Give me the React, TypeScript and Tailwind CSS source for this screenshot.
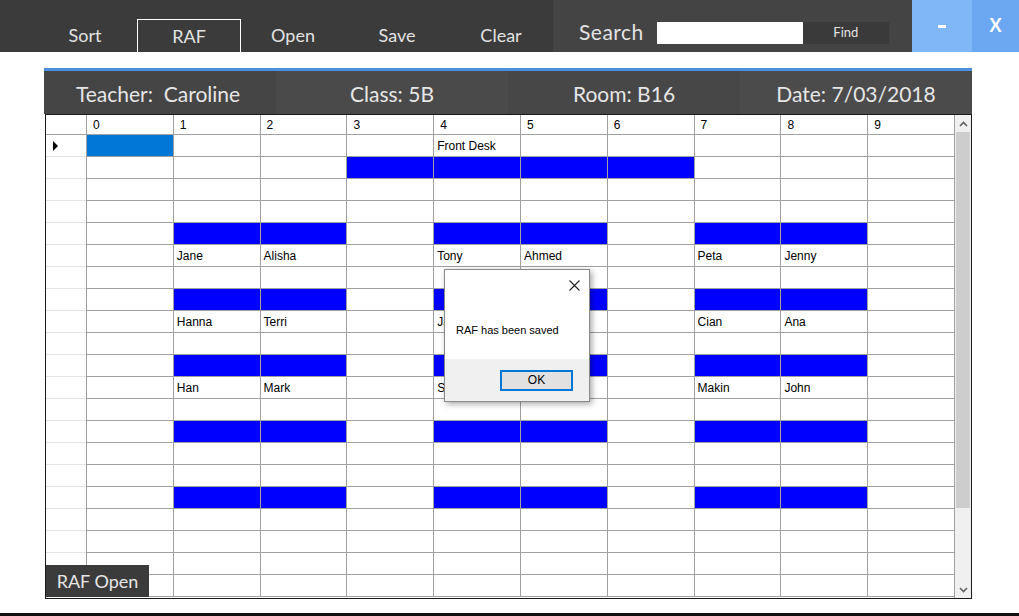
import React from "react";

type Cell = string;

const B = "#B";
const SEL = "#S";

const rows: Cell[][] = [
  [SEL, "", "", "", "Front Desk", "", "", "", "", ""],
  ["", "", "", B, B, B, B, "", "", ""],
  ["", "", "", "", "", "", "", "", "", ""],
  ["", "", "", "", "", "", "", "", "", ""],
  ["", B, B, "", B, B, "", B, B, ""],
  ["", "Jane", "Alisha", "", "Tony", "Ahmed", "", "Peta", "Jenny", ""],
  ["", "", "", "", "", "", "", "", "", ""],
  ["", B, B, "", B, B, "", B, B, ""],
  ["", "Hanna", "Terri", "", "Jack", "", "", "Cian", "Ana", ""],
  ["", "", "", "", "", "", "", "", "", ""],
  ["", B, B, "", B, B, "", B, B, ""],
  ["", "Han", "Mark", "", "Sam", "", "", "Makin", "John", ""],
  ["", "", "", "", "", "", "", "", "", ""],
  ["", B, B, "", B, B, "", B, B, ""],
  ["", "", "", "", "", "", "", "", "", ""],
  ["", "", "", "", "", "", "", "", "", ""],
  ["", B, B, "", B, B, "", B, B, ""],
  ["", "", "", "", "", "", "", "", "", ""],
  ["", "", "", "", "", "", "", "", "", ""],
  ["", "", "", "", "", "", "", "", "", ""],
  ["", "", "", "", "", "", "", "", "", ""],
];

const menu = ["Sort", "RAF", "Open", "Save", "Clear"];

function GridCell({ value }: { value: Cell }) {
  if (value === B) return <div className="h-full border-l border-b border-[#a0a0a0] bg-[#0000ff]" />;
  if (value === SEL) return <div className="h-full border-l border-b border-[#a0a0a0] bg-[#0078d7]" />;
  return (
    <div className="h-full border-l border-b border-[#a0a0a0] pl-[3px] flex items-center text-[12px] text-black whitespace-nowrap overflow-hidden">
      {value}
    </div>
  );
}

export default function App() {
  return (
    <div
      className="relative w-[1019px] h-[616px] bg-white overflow-hidden"
      style={{ fontFamily: "Lato, 'Open Sans', sans-serif" }}
    >
      {/* title / menu bar */}
      <div className="flex h-[52px] bg-[#3b3b3b] text-[#e2e2e2]">
        <div className="flex pl-[33px]">
          {menu.map((m) => (
            <div
              key={m}
              className={
                "w-[104px] h-[33px] self-end flex items-center justify-center text-[18px] " +
                (m === "RAF" ? "border border-white border-b-0" : "")
              }
            >
              {m}
            </div>
          ))}
        </div>
        <div className="w-[359px] bg-[#444444] flex items-end pl-[26px] pb-[7px]">
          <span className="text-[21px] tracking-[0.5px] mr-[13px] leading-[26px]">Search</span>
          <div className="w-[146px] h-[22px] mb-[1px] bg-white" />
          <div className="w-[86px] h-[22px] mb-[1px] bg-[#3a3a3a] flex items-center justify-center text-[13px]">Find</div>
        </div>
        <div className="w-[60px] bg-[#80b7f6] flex items-center justify-center">
          <div className="w-[8px] h-[3px] bg-white" />
        </div>
        <div className="flex-1 bg-[#6ca7f1] flex items-center justify-center text-white text-[18px] font-bold pb-[2px]">
          X
        </div>
      </div>

      {/* main panel */}
      <div className="pt-[16px] pl-[44px]">
        <div className="w-[928px]">
          <div className="h-[3px] bg-[#4b8fe0]" />
          <div className="grid grid-cols-4 h-[43px] text-[#e6e6e6] text-[21px]">
            <div className="bg-[#454545] flex items-center justify-center pt-[3px] pr-[4px]">Teacher:&nbsp; Caroline</div>
            <div className="bg-[#4a4a4a] flex items-center justify-center pt-[3px]">Class: 5B</div>
            <div className="bg-[#474747] flex items-center justify-center pt-[3px]">Room: B16</div>
            <div className="bg-[#4b4b4b] flex items-center justify-center pt-[3px]">Date: 7/03/2018</div>
          </div>

          {/* data grid */}
          <div
            className="ml-[1px] h-[485px] border border-[#1a1a1a] flex"
            style={{ fontFamily: "'Liberation Sans', Arial, sans-serif" }}
          >
            <div className="flex-1 min-w-0 flex flex-col">
              <div className="grid grid-cols-[40px_repeat(10,minmax(0,1fr))] h-[20px]">
                <div className="border-b border-[#a0a0a0]" />
                {Array.from({ length: 10 }, (_, i) => (
                  <div key={i} className="border-l border-b border-[#a0a0a0] pl-[6px] flex items-center text-[12px] text-black">
                    {i}
                  </div>
                ))}
              </div>
              {rows.map((r, ri) => (
                <div key={ri} className="grid grid-cols-[40px_repeat(10,minmax(0,1fr))] h-[22px]">
                  <div className="h-full border-b border-[#e3e3e3] flex items-center pl-[7px]">
                    {ri === 0 && (
                      <svg width="6" height="10" viewBox="0 0 6 10">
                        <path d="M0 0 L5 5 L0 10 Z" fill="#000" />
                      </svg>
                    )}
                  </div>
                  {r.map((c, ci) => (
                    <GridCell key={ci} value={c} />
                  ))}
                </div>
              ))}
            </div>
            <div className="w-[17px] bg-[#f0f0f0] flex flex-col border-l border-[#a0a0a0]">
              <div className="h-[17px] flex items-center justify-center">
                <svg width="9" height="6" viewBox="0 0 9 6">
                  <path d="M1 5 L4.5 1.5 L8 5" stroke="#606060" strokeWidth="1.6" fill="none" />
                </svg>
              </div>
              <div className="h-[376px] mx-[1px] bg-[#cdcdcd]" />
              <div className="flex-1" />
              <div className="h-[17px] flex items-center justify-center">
                <svg width="9" height="6" viewBox="0 0 9 6">
                  <path d="M1 1 L4.5 4.5 L8 1" stroke="#606060" strokeWidth="1.6" fill="none" />
                </svg>
              </div>
            </div>
          </div>
        </div>
      </div>

      {/* bottom edge */}
      <div className="absolute left-0 right-0 bottom-0 h-[3px] bg-[#111]" />

      {/* status label */}
      <div className="absolute left-[46px] top-[565px] w-[103px] h-[32px] bg-[#3b3b3b] text-[#e6e6e6] text-[18px] flex items-center justify-center">
        RAF Open
      </div>

      {/* message box */}
      <div
        className="absolute left-[444px] top-[269px] w-[146px] h-[133px] bg-white border border-[#8a8a8a] shadow-[2px_2px_6px_rgba(0,0,0,0.35)] flex flex-col"
        style={{ fontFamily: "'Liberation Sans', Arial, sans-serif" }}
      >
        <div className="h-[30px] flex justify-end items-center pr-[9px]">
          <svg width="11" height="11" viewBox="0 0 11 11">
            <path d="M0.5 0.5 L10.5 10.5 M10.5 0.5 L0.5 10.5" stroke="#222" strokeWidth="1.1" />
          </svg>
        </div>
        <div className="flex-1 pl-[11px] pt-[22px] text-[11px] text-black">RAF has been saved</div>
        <div className="h-[42px] bg-[#f0f0f0] flex justify-end items-center pr-[16px]">
          <div className="w-[73px] h-[21px] border-2 border-[#0078d7] bg-[#e1e1e1] flex items-center justify-center text-[12px] text-black">
            OK
          </div>
        </div>
      </div>
    </div>
  );
}
